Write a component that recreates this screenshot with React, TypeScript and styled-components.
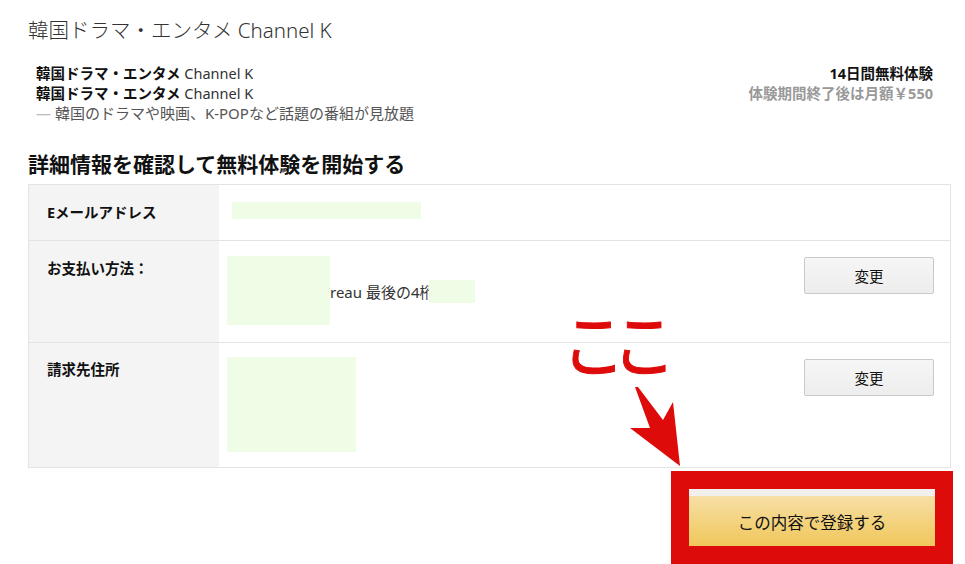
import React from "react";
import styled, { createGlobalStyle } from "styled-components";

const GlobalStyle = createGlobalStyle`
  html, body { margin: 0; padding: 0; background: #fff; }
  body {
    font-family: "Noto Sans", "Noto Sans CJK JP", sans-serif;
    color: #111;
    -webkit-font-smoothing: antialiased;
  }
  * { box-sizing: border-box; }
`;

const Page = styled.div`
  position: relative;
  width: 965px;
  height: 564px;
  overflow: hidden;
  padding: 17px 14px 0 28px;
`;

const Title = styled.h1`
  margin: 0;
  font-size: 20.5px;
  line-height: 26px;
  font-weight: 300;
  color: #333;
`;

const Summary = styled.div`
  display: flex;
  justify-content: space-between;
  align-items: flex-start;
  margin: 20px 18px 0 8px;
  font-size: 14.5px;
  line-height: 20px;
`;

const Offer = styled.div`
  display: flex;
  flex-direction: column;
`;

const OfferName = styled.div`
  font-weight: 700;
  color: #111;
`;

const Latin = styled.span`
  font-weight: 400;
  color: #333;
`;

const Tagline = styled.div`
  font-size: 15px;
  color: #555;
`;

const Dash = styled.span`
  color: #bbb;
`;

const Price = styled.div`
  display: flex;
  flex-direction: column;
  align-items: flex-end;
`;

const PriceMain = styled.div`
  font-weight: 700;
  color: #111;
`;

const PriceSub = styled.div`
  font-weight: 700;
  color: #999;
`;

const Heading = styled.h2`
  margin: 26px 0 0;
  font-size: 21px;
  line-height: 28px;
  font-weight: 700;
  color: #111;
  font-family: "Noto Sans CJK JP", sans-serif;
`;

const Table = styled.div`
  margin-top: 7px;
  border: 1px solid #e3e3e3;
`;

const Row = styled.div<{ $first?: boolean }>`
  display: grid;
  grid-template-columns: 190px 1fr;
  border-top: ${(p) => (p.$first ? "none" : "1px solid #e3e3e3")};
`;

const Label = styled.div<{ $pt: number }>`
  background: #f4f4f4;
  padding: ${(p) => p.$pt}px 18px 0;
  font-size: 14.5px;
  line-height: 20px;
  font-weight: 700;
  color: #111;
`;

const Cell = styled.div<{ $pt: number; $pb: number; $pl: number }>`
  display: flex;
  justify-content: space-between;
  align-items: flex-start;
  padding: ${(p) => `${p.$pt}px 16px ${p.$pb}px ${p.$pl}px`};
`;

const Masked = styled.div<{ $w: number; $h: number }>`
  width: ${(p) => p.$w}px;
  height: ${(p) => p.$h}px;
  background: #effde7;
  flex: none;
`;

const Payment = styled.div`
  display: flex;
  align-items: center;
`;

const CardText = styled.span`
  font-size: 15px;
  line-height: 20px;
  color: #333;
  white-space: nowrap;
  margin-top: 2px;
`;

const CardMask = styled(Masked)`
  margin-left: -6px;
  margin-top: 2px;
`;

const ChangeButton = styled.button<{ $mt: number }>`
  width: 130px;
  height: 37px;
  margin-top: ${(p) => p.$mt}px;
  flex: none;
  border: 1px solid #c9c9c9;
  border-radius: 2px;
  background: linear-gradient(#f6f6f6, #ededed);
  font-family: "Noto Sans CJK JP", sans-serif;
  font-size: 14.5px;
  color: #111;
  padding: 0;
`;

const Footer = styled.div`
  display: flex;
  justify-content: flex-end;
  margin: 3px -2px 0 0;
`;

const Highlight = styled.div`
  border: 18px solid #de0b0b;
`;

const SubmitButton = styled.button`
  display: block;
  width: 246px;
  height: 57px;
  border: none;
  padding: 8px 0 0;
  background: linear-gradient(#f1f0ec 0, #f1f0ec 7px, #f7dfa6 7px, #f0c75a 100%);
  font-family: "Noto Sans CJK JP", sans-serif;
  font-size: 16.5px;
  color: #111;
`;

const Callout = styled.div`
  position: absolute;
  left: 562px;
  top: 307px;
  font-family: "Noto Sans CJK JP", sans-serif;
  font-size: 70px;
  line-height: 1;
  font-weight: 400;
  color: #de0b0b;
  -webkit-text-stroke: 1px #de0b0b;
  letter-spacing: -14px;
  white-space: nowrap;
  transform: scaleX(0.9);
  transform-origin: left top;
`;

const Arrow = styled.svg`
  position: absolute;
  left: 628px;
  top: 384px;
`;

export default function App() {
  return (
    <>
      <GlobalStyle />
      <Page>
        <Title>韓国ドラマ・エンタメ Channel K</Title>
        <Summary>
          <Offer>
            <OfferName>
              韓国ドラマ・エンタメ <Latin>Channel K</Latin>
            </OfferName>
            <OfferName>
              韓国ドラマ・エンタメ <Latin>Channel K</Latin>
            </OfferName>
            <Tagline>
              <Dash>—</Dash> 韓国のドラマや映画、K-POPなど話題の番組が見放題
            </Tagline>
          </Offer>
          <Price>
            <PriceMain>14日間無料体験</PriceMain>
            <PriceSub>体験期間終了後は月額￥550</PriceSub>
          </Price>
        </Summary>
        <Heading>詳細情報を確認して無料体験を開始する</Heading>
        <Table>
          <Row $first>
            <Label $pt={17}>Eメールアドレス</Label>
            <Cell $pt={17} $pb={21} $pl={13}>
              <Masked $w={189} $h={17} />
            </Cell>
          </Row>
          <Row>
            <Label $pt={17}>お支払い方法：</Label>
            <Cell $pt={15} $pb={17} $pl={8}>
              <Payment>
                <Masked $w={103} $h={69} />
                <CardText>reau 最後の4桁</CardText>
                <CardMask $w={46} $h={23} />
              </Payment>
              <ChangeButton $mt={1}>変更</ChangeButton>
            </Cell>
          </Row>
          <Row>
            <Label $pt={16}>請求先住所</Label>
            <Cell $pt={14} $pb={15} $pl={8}>
              <Masked $w={129} $h={95} />
              <ChangeButton $mt={2}>変更</ChangeButton>
            </Cell>
          </Row>
        </Table>
        <Footer>
          <Highlight>
            <SubmitButton>この内容で登録する</SubmitButton>
          </Highlight>
        </Footer>
        <Callout>ここ</Callout>
        <Arrow width="56" height="86" viewBox="0 0 56 86">
          <polygon
            points="7,3 10,3 35,36 45,18 52,82 2,44 22,44"
            fill="#de0b0b"
          />
        </Arrow>
      </Page>
    </>
  );
}
